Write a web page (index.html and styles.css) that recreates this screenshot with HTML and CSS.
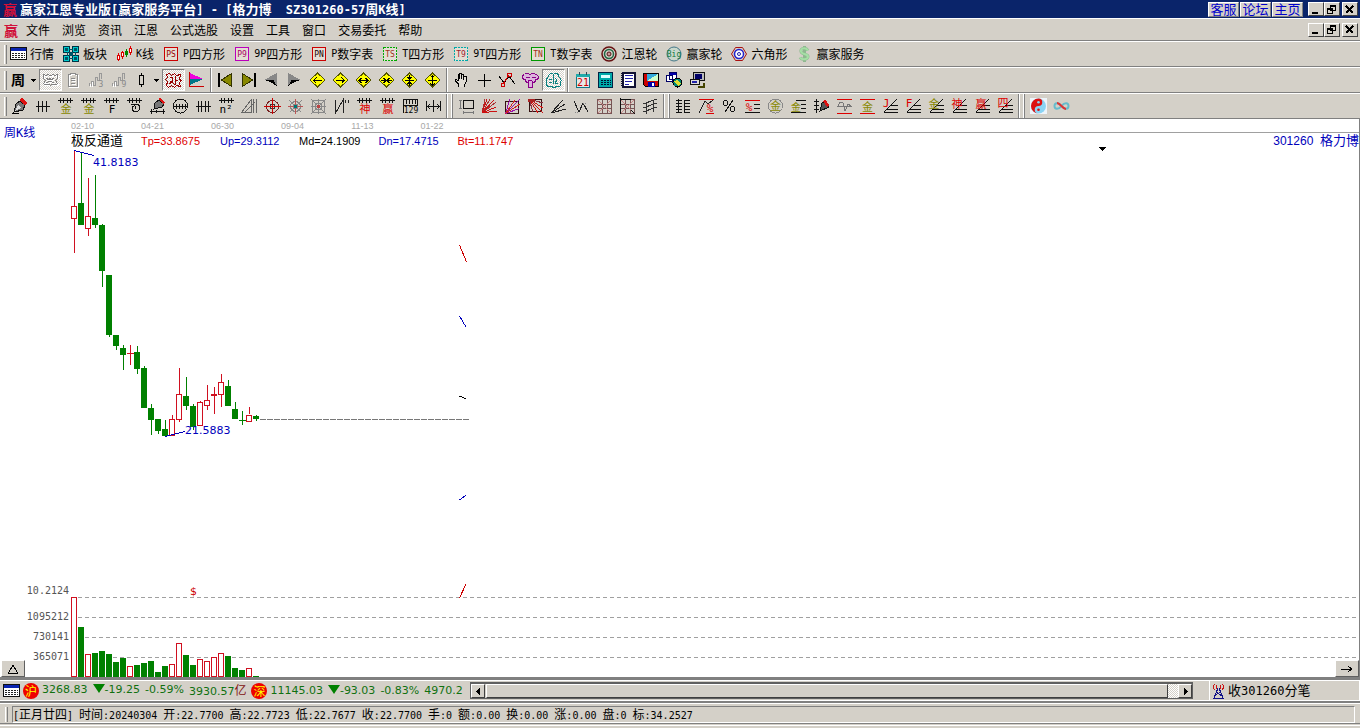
FILE: index.html
```html
<!DOCTYPE html>
<html lang="zh-CN">
<head>
<meta charset="utf-8">
<title>赢家江恩专业版</title>
<link rel="stylesheet" href="styles.css">
</head>
<body>
<svg class="defs" aria-hidden="true">
<defs>
<symbol id="table" viewBox="0 0 17 16"><rect x=".5" y="1.5" width="16" height="12" fill="#fff" stroke="#111"/><path d="M1 2h15v3H1z" fill="#0a24b0"/><path d="M2 7.5h13M2 9.5h13M2 11.5h13" stroke="#222" stroke-dasharray="2 1"/></symbol>
<symbol id="blocks" viewBox="0 0 17 16"><g fill="#0cc" stroke="#034"><path d="M.5.5h6v6h-6zM9.500.5h6v6h-6zM.5 9.500h6v6h-6zM9.500 9.500h6v6h-6z"/></g><path d="M2 2h3v3H2zM11 2h3v3h-3zM2 11h3v3H2zM11 11h3v3h-3zM6 3h4v1H6zM4 6h1v4H4zM12 6h1v4h-1zM6 12h4v1H6zM6 6h4v4H6z" fill="#056"/></symbol>
<symbol id="kline" viewBox="0 0 17 16"><path d="M2.500 7v8M6.500 5v8M14.500 0v9" stroke="#d00"/><path d="M10.500 3v8" stroke="#080"/><g fill="#fff" stroke="#d00"><path d="M1.500 9.500h2v4h-2zM5.500 6.500h2v4h-2zM13.500 2.500h2v4h-2z"/></g><path d="M9 5h3v4H9z" fill="#080"/></symbol>
<symbol id="ps" viewBox="0 0 17 16"><rect x="1.500" y="1.500" width="13" height="13" fill="#e4ded4" stroke="#c00"/><text x="8" y="11" fill="#900">PS</text></symbol>
<symbol id="p9" viewBox="0 0 17 16"><rect x="1.500" y="1.500" width="13" height="13" fill="#e4ded4" stroke="#b0b"/><text x="8" y="11" fill="#a06">P9</text></symbol>
<symbol id="pn" viewBox="0 0 17 16"><rect x="1.500" y="1.500" width="13" height="13" fill="#e4ded4" stroke="#c00"/><text x="8" y="11" fill="#200">PN</text></symbol>
<symbol id="ts" viewBox="0 0 17 16"><rect x="1.500" y="1.500" width="13" height="13" fill="#e4ded4" stroke="#0a0" stroke-dasharray="2 1"/><text x="8" y="11" fill="#a03020">TS</text></symbol>
<symbol id="t9" viewBox="0 0 17 16"><rect x="1.500" y="1.500" width="13" height="13" fill="#e4ded4" stroke="#0aa" stroke-dasharray="2 1"/><text x="8" y="11" fill="#a02030">T9</text></symbol>
<symbol id="tn" viewBox="0 0 17 16"><rect x="1.500" y="1.500" width="13" height="13" fill="#e4ded4" stroke="#090"/><text x="8" y="11" fill="#a03020">TN</text></symbol>
<symbol id="wheel" viewBox="0 0 17 16"><g fill="none" shape-rendering="geometricPrecision"><circle cx="8" cy="8" r="7" stroke="#611" stroke-width="1.500"/><circle cx="8" cy="8" r="4.500" stroke="#264" stroke-width="1.500"/><circle cx="8" cy="8" r="2" stroke="#511" fill="#c99"/></g></symbol>
<symbol id="big" viewBox="0 0 17 16"><circle cx="8" cy="8" r="7" fill="#c9d8cc" stroke="#478" shape-rendering="geometricPrecision"/><text x="8" y="11" fill="#174">Big</text></symbol>
<symbol id="hexa" viewBox="0 0 17 16"><g fill="none" shape-rendering="geometricPrecision"><path d="M4.500 1.500h7l4 6.500-4 6.500h-7L.5 8z" stroke="#a11"/><circle cx="8" cy="8" r="4.500" fill="#fff" stroke="#22c" stroke-width="1.500"/><circle cx="8" cy="8" r="1.500" stroke="#22a"/></g></symbol>
<symbol id="dollar" viewBox="0 0 17 16"><g fill="none" shape-rendering="geometricPrecision"><path d="M12 4.500C10 1 4 2 5 5.500s7 2 7 5-6 4-8 1M8.500 0v16" stroke="#8fb890" stroke-width="3"/><path d="M12 4.500C10 1 4 2 5 5.500s7 2 7 5-6 4-8 1" stroke="#a5e0a5" stroke-width="2"/></g></symbol>

<symbol id="zhou" viewBox="0 0 17 16"><text x="8" y="13" class="t14">周</text></symbol>
<symbol id="down" viewBox="0 0 17 16"><path d="M6 7h5v1h-1v1H9v1H8V9H7V8H6z"/></symbol>
<symbol id="mask" viewBox="0 0 17 16"><path d="M1.500 2.500c3 2 4-1 7 1 3-2 4 1 7-1v4l-2 2 2 3c-2 3-5 0-7 2-2-2-5 1-7-2l2-3-2-2zM4 6l3 2 1-2 1 2 3-2M4 11l4-2 4 2" fill="none" stroke="#fff" transform="translate(1 1)"/><path d="M1.500 2.500c3 2 4-1 7 1 3-2 4 1 7-1v4l-2 2 2 3c-2 3-5 0-7 2-2-2-5 1-7-2l2-3-2-2zM4 6l3 2 1-2 1 2 3-2M4 11l4-2 4 2" fill="none" stroke="#808080"/></symbol>
<symbol id="clip" viewBox="0 0 17 16"><path d="M3.500 2.500h2v-1h5v1h2v12h-9zM6 6.500h4M6 8.500h4M6 11.500h4" fill="none" stroke="#fff" transform="translate(1 1)"/><path d="M3.500 2.500h2v-1h5v1h2v12h-9zM6 6.500h4M6 8.500h4M6 11.500h4" fill="none" stroke="#8a8a8a"/></symbol>
<symbol id="zig3" viewBox="0 0 17 16"><path d="M1.500 11v3M3.500 14V9h2v4h2V5h2v3h2V1h2v6" fill="none" stroke="#999"/><path d="M2.500 12v3M4.500 15v-5" stroke="#fff"/><text x="13" y="15" fill="#888">3</text></symbol>
<symbol id="zig9" viewBox="0 0 17 16"><path d="M1.500 11v3M3.500 14V9h2v4h2V5h2v3h2V1h2v6" fill="none" stroke="#999"/><path d="M2.500 12v3M4.500 15v-5" stroke="#fff"/><text x="13" y="15" fill="#888">9</text></symbol>
<symbol id="candle" viewBox="0 0 17 16"><path d="M8.500 1v14" stroke="#000"/><path d="M6.500 3.500h4v9h-4z" fill="#d4d0c8" stroke="#000"/></symbol>
<symbol id="redface" viewBox="0 0 17 16"><path d="M1.500 2.500l3-1 2 2 3-2 2 2 4-1-1 5 2 1-2 2 1 4-4-1-2 2-3-2-3 2-2-2 1-4-2-2 2-2zM5 5h2v4H5M10 4v4h3M4 12l3-2 3 3 1-4" fill="none" stroke="#900"/></symbol>
<symbol id="flag" viewBox="0 0 17 16"><path d="M1.500 0v14M1 14.500h15" stroke="#c00"/><path d="M2 1l13 6H2z" fill="#e0d"/><path d="M2 7h13L2 13z" fill="#078"/></symbol>
<symbol id="first" viewBox="0 0 17 16"><path d="M1 1h2v14H1z"/><path d="M4.500 8l10-6.500v13z" fill="#880" stroke="#330"/></symbol>
<symbol id="last" viewBox="0 0 17 16"><path d="M14 1h2v14h-2z"/><path d="M12.500 8l-10-6.500v13z" fill="#880" stroke="#330"/></symbol>
<symbol id="prev" viewBox="0 0 17 16"><path d="M14 1v13L8 9 1 8z" fill="#888"/><path d="M1 7.500h9l4 6.500-5-3z"/></symbol>
<symbol id="next" viewBox="0 0 17 16"><path d="M2 1v13l6-5 7-1z" fill="#888"/><path d="M15 7.500H6L2 14l5-3z"/></symbol>
<symbol id="dia" viewBox="0 0 17 16"><path d="M1 8l7.500-7L16 8l-7.500 7z" fill="#ff0" stroke="#550"/></symbol>
<symbol id="d1" viewBox="0 0 17 16"><use href="#dia"/><path d="M5 8.500h8M7.500 5.500L5 8.500l2.500 3" fill="none" stroke="#000"/></symbol>
<symbol id="d2" viewBox="0 0 17 16"><use href="#dia"/><path d="M4 8.500h8M9.500 5.500l2.500 3-2.500 3" fill="none" stroke="#000"/></symbol>
<symbol id="d3" viewBox="0 0 17 16"><use href="#dia"/><path d="M4 8.500h9M6.500 6L4 8.500 6.500 11M10.500 6L13 8.500 10.500 11" fill="none" stroke="#000"/></symbol>
<symbol id="d4" viewBox="0 0 17 16"><use href="#dia"/><path d="M3 8.500h11M5.500 6L8 8.500 5.500 11M11.500 6L9 8.500l2.500 2.500" fill="none" stroke="#000"/></symbol>
<symbol id="d5" viewBox="0 0 17 16"><use href="#dia"/><path d="M4 8.500h9M8.500 3v11M6.500 5L8.500 7l2-2M6.500 12l2-2 2 2" fill="none" stroke="#000"/></symbol>
<symbol id="d6" viewBox="0 0 17 16"><use href="#dia"/><path d="M4 8.500h9M8.500 3v11M6.500 5.500l2-2 2 2M6.500 11.500l2 2 2-2" fill="none" stroke="#000"/></symbol>
<symbol id="hand" viewBox="0 0 17 16"><path d="M5.500 15v-3L2.500 9V7.500l3 1v-6h1V7V1.500h2V7V2.500h2V8V4.500h2.500V10l-1.500 3v2" fill="#e0dcd4" stroke="#000"/></symbol>
<symbol id="cross" viewBox="0 0 17 16"><path d="M8.500 2v13M2 8.500h13" stroke="#000"/></symbol>
<symbol id="nodes" viewBox="0 0 17 16"><path d="M0 4l5 7 5-7 6 8" fill="none" stroke="#000"/><g fill="none" stroke="#c00"><path d="M4 12l6-9"/><circle cx="4" cy="13" r="2"/><circle cx="10.500" cy="3" r="2"/></g></symbol>
<symbol id="cloud" viewBox="0 0 17 16"><path d="M2.500 2.500c2-2 4-1 6 0 2-2 5-1 7 1s0 5-2 4.500c0 2-1 2.500-3 2v5h-4v-5c-2 1-3-.5-3-2.500-4 0-4-4-1-5z" fill="#dcb4dc" stroke="#808"/><path d="M4 5.500h4M10 5.500h4M6 8.500h4" stroke="#808"/></symbol>
<symbol id="brain" viewBox="0 0 17 16"><path d="M3.500 4.500c1-4 3-4 5-2 2-3 5-1 5 2 3 2 3 4 2 6 1 4-2 5-4 4-1 1-4 1-5 0-3 1-6-1-5-4-1-2 0-4 2-6zM8.500 3v9M4 7h3M4 10.500h3M10 6l2 2-2 3 3 1" fill="none" stroke="#0a8080"/></symbol>
<symbol id="cal" viewBox="0 0 17 16"><path d="M2.500 3.500h13v12h-13z" fill="#e8e8e8" stroke="#178"/><path d="M2 2h14v3H2z" fill="#2aa"/><path d="M5 0v3M12 0v3" stroke="#345"/><text x="9" y="14" fill="#c00" class="t9">21</text></symbol>
<symbol id="calc" viewBox="0 0 17 16"><path d="M1.500.5h14v15h-14z" fill="#0aa" stroke="#024"/><path d="M4 3h9v3H4z" fill="#dff"/><path d="M4 8.500h10M4 10.500h10M4 12.500h10" stroke="#013" stroke-width="1.500" stroke-dasharray="2 1"/></symbol>
<symbol id="note" viewBox="0 0 17 16"><path d="M2.500.5h12v14h-12z" fill="#fff" stroke="#113" stroke-width="2"/><path d="M5 3.500h8M5 6.500h8M5 9.500h7M5 12.500h4" stroke="#22a"/><path d="M2 1v14" stroke="#113" stroke-width="2" stroke-dasharray="1 1"/></symbol>
<symbol id="disk" viewBox="0 0 17 16"><path d="M.5 1.500h15v13h-13l-2-2z" fill="#c00" stroke="#000"/><path d="M4 2h11v7H4z" fill="#3ad"/><path d="M4 9l11-7v7z" fill="#cfc"/><path d="M5 10h7v5H5z" fill="#00a"/><path d="M9 11h2v3H9z" fill="#fff"/></symbol>
<symbol id="net" viewBox="0 0 17 16"><path d="M3.500.5h7v7h-7zM.5 3.500h6v6h-6z" fill="#fff" stroke="#006"/><path d="M4 1h6v2H4z" fill="#00a"/><circle cx="11.500" cy="10.500" r="4.500" fill="#087" stroke="#000"/><path d="M8 9l4-1 3 4-3 2z" fill="#dd3"/></symbol>
<symbol id="pcs" viewBox="0 0 17 16"><path d="M4.500.5h11v8h-11z" fill="#bbb" stroke="#111"/><path d="M6 2h7v5H6z" fill="#006"/><path d="M1.500 7.500h9v5h-9z" fill="#ddd" stroke="#111"/><path d="M3 9h5v2H3z" fill="#22a"/><path d="M9 14.500h6v-4" fill="none" stroke="#440" stroke-width="2"/></symbol>

<symbol id="pen" viewBox="0 0 17 16"><path d="M3 14l2-8 4-3 5 4-2 5z" fill="#777" stroke="#111"/><path d="M8 2l3-2 5 5-2 3z" fill="#d11"/><path d="M4 13l3-6 3 3z" fill="#ddd"/><path d="M1 15.500h7" stroke="#000"/></symbol>
<symbol id="ruler" viewBox="0 0 17 16"><path d="M2 8.500h14M4.500 3v11M8.500 3v11M12.500 3v11" stroke="#111"/></symbol>
<symbol id="scale" viewBox="0 0 17 16"><path d="M1 2.500h15M3.500 0v5M6.500 0v5M10.500 0v5M13.500 0v5" stroke="#111"/></symbol>
<symbol id="gold1" viewBox="0 0 17 16"><use href="#scale"/><text x="9" y="15" fill="#880" class="t11">金</text></symbol>
<symbol id="fscale" viewBox="0 0 17 16"><use href="#scale"/><text x="9" y="15" class="t11">F</text></symbol>
<symbol id="spiral" viewBox="0 0 17 16"><use href="#scale"/><path d="M5 6.500h7c3 2 2 7-2 7s-5-3-3-5 4 1 2 2" fill="none" stroke="#111"/></symbol>
<symbol id="penruler" viewBox="0 0 17 16"><path d="M5 11l1-6 4-3 5 4-2 3z" fill="#777" stroke="#111"/><path d="M9 1l2-1 5 4-1 3z" fill="#d11"/><path d="M1 13.500h15M2.500 11v5M7.500 12v3M14.500 11v5" stroke="#111"/></symbol>
<symbol id="orb" viewBox="0 0 17 16"><circle cx="8.500" cy="8" r="7" fill="none" stroke="#111"/><path d="M2 8.500h13M4.500 6v5M7.500 6v5M10.500 6v5M13.500 6v5" stroke="#111"/></symbol>
<symbol id="ruler4" viewBox="0 0 17 16"><path d="M1 8.500h15M3.500 3v11M6.500 3v11M10.500 3v11M13.500 3v11" stroke="#111"/></symbol>
<symbol id="nsq" viewBox="0 0 17 16"><use href="#scale"/><text x="8" y="15" class="t11">n²</text></symbol>
<symbol id="fork" viewBox="0 0 17 16"><path d="M1 14l9-12v12zM12.500 1v14M15.500 1v14M4 14L14 4" fill="none" stroke="#666"/></symbol>
<symbol id="target" viewBox="0 0 17 16"><circle cx="8.500" cy="8.500" r="6" fill="none" stroke="#722"/><circle cx="8.500" cy="8.500" r="2.500" fill="none" stroke="#333"/><path d="M8.500 0v16M0 8.500h17" stroke="#c00"/></symbol>
<symbol id="star" viewBox="0 0 17 16"><g fill="none" stroke="#888"><circle cx="8.500" cy="8.500" r="5"/><circle cx="8.500" cy="8.500" r="2.500"/><path d="M2.500 2.500l12 12M14.500 2.500l-12 12"/></g><path d="M8.500 1v15M1 8.500h15" stroke="#b55"/><path d="M7 7h3v3H7z" fill="#077"/></symbol>
<symbol id="web" viewBox="0 0 17 16"><g fill="none" stroke="#888"><path d="M2.500 2.500h12v12h-12zM5.500 5.500h6v6h-6zM1 1l15 15M16 1L1 16M8.500 1v15M1 8.500h15"/></g><path d="M7 7h3v3H7z" fill="#b44"/></symbol>
<symbol id="angle" viewBox="0 0 17 16"><path d="M2.500 2v13L10 2v13M12.500 2v3M15.500 2v3" fill="none" stroke="#222"/></symbol>
<symbol id="shen" viewBox="0 0 17 16"><use href="#scale"/><text x="9" y="15" fill="#d00" class="t11">神</text></symbol>
<symbol id="ying" viewBox="0 0 17 16"><use href="#scale"/><text x="9" y="15" fill="#d00" class="t11">赢</text></symbol>
<symbol id="r129" viewBox="0 0 17 16"><path d="M1 1.500h15M1.500 1v14M15.500 1v7M4.500 1v5M7.500 1v5M10.500 1v5M13 1v5M1 7.500h15" stroke="#111"/><text x="9" y="15">129</text></symbol>
<symbol id="span" viewBox="0 0 17 16"><path d="M1.500 3v10M15.500 3v10M8.500 2v12M2 8.500h13M5 6L2.500 8.500 5 11M12 6l2.500 2.500L12 11" fill="none" stroke="#111"/></symbol>
<symbol id="measure" viewBox="0 0 17 16"><path d="M1 2.500h3M2.500 2v9M1 10.500h3M5.500 13v3M15.500 13v3M5 14.500h10" fill="none" stroke="#777"/><path d="M5.500 2.500h10v8h-10z" fill="none" stroke="#111"/></symbol>
<symbol id="fan" viewBox="0 0 17 16"><path d="M1 15L4 1M1 15L9 1M1 15L15 4" stroke="#a33"/><path d="M1 15l5-14M1 15L13 2M1 15l14-6M1 15l15-2" stroke="#c11"/></symbol>
<symbol id="fanbox" viewBox="0 0 17 16"><path d="M1.500 3.500h13v12h-13z" fill="none" stroke="#311"/><path d="M1.500 15.500L6 1M1.500 15.500L16 1M1.500 15.500l14-5" stroke="#91a"/><path d="M1.500 15.500L11 2M1.500 15.500L16 6" stroke="#c22"/></symbol>
<symbol id="fanbox2" viewBox="0 0 17 16"><path d="M2.500 1.500h12v12h-12z" fill="none" stroke="#311"/><path d="M2 1l14 14M2 1l9 14M2 1l14 9" stroke="#c11"/><path d="M2 1l4 13M2 1l14 4" stroke="#834"/><path d="M1 1h7v3H1z" fill="#a22"/></symbol>
<symbol id="rays" viewBox="0 0 17 16"><path d="M1 15L13 2M1 15l14-9M1 15l15-4" stroke="#222"/></symbol>
<symbol id="vee" viewBox="0 0 17 16"><path d="M1 3l5 11 4-9 5 9" fill="none" stroke="#222"/><path d="M2 14.500h4M10 5.500h3" stroke="#888" stroke-dasharray="1 1"/></symbol>
<symbol id="grid" viewBox="0 0 17 16"><path d="M1.500 1.500h14v14h-14zM6.500 1v15M11.500 1v15M1 6.500h15M1 10.500h15" fill="none" stroke="#755"/><path d="M2 2l13 13M15 2L2 15" stroke="#c88"/></symbol>
<symbol id="gridx" viewBox="0 0 17 16"><use href="#grid"/><path d="M1.500 0v16M1 1.500h11M12 12l4 4" stroke="#111"/></symbol>
<symbol id="para" viewBox="0 0 17 16"><path d="M1 6l14-5M1 10l14-5M1 14l14-5M4.500 4v12M11.500 2v12" fill="none" stroke="#333"/></symbol>
<symbol id="levels" viewBox="0 0 17 16"><path d="M3.500 1v14M1 2.500h6M1 5.500h6M1 8.500h6M1 11.500h6M1 14.500h6M9 2.500h6M9 5.500h6M9 8.500h6M9 11.500h6M9 14.500h6M9.500 2v13" fill="none" stroke="#111"/></symbol>
<symbol id="curvepct" viewBox="0 0 17 16"><path d="M1 1.500h15M8 15.500h8" stroke="#d00"/><path d="M1 15L7 3l3 3 5-4" fill="none" stroke="#222"/><text x="12" y="14" fill="#d00" class="t11">%</text></symbol>
<symbol id="pct" viewBox="0 0 17 16"><g fill="none" stroke="#111"><circle cx="4.500" cy="5" r="2.500"/><circle cx="11.500" cy="11" r="2.500"/><path d="M12 2L4 14"/></g></symbol>
<symbol id="pctlines" viewBox="0 0 17 16"><path d="M10 6.500h6M10 10.500h6M1 14.500h15" stroke="#111"/><path d="M1 2.500h15" stroke="#d00"/><text x="5" y="13" fill="#d00" class="t11">%</text></symbol>
<symbol id="goldring" viewBox="0 0 17 16"><circle cx="8.500" cy="8" r="7" fill="none" stroke="#888"/><text x="8.500" y="12" fill="#880" class="t11">金</text></symbol>
<symbol id="goldlines" viewBox="0 0 17 16"><path d="M6 2.500h10M11 6.500h5M11 10.500h5M1 14.500h15" stroke="#111"/><text x="6" y="13" fill="#880" class="t9">金</text></symbol>
<symbol id="penlevels" viewBox="0 0 17 16"><path d="M3.500 1v14M1 3.500h5M1 7.500h5M1 11.500h5" stroke="#111"/><path d="M7 13l2-8 3-2 4 6z" fill="#555" stroke="#111"/><path d="M10 3l2-2 4 6-1 3z" fill="#d11"/></symbol>
<symbol id="wave" viewBox="0 0 17 16"><path d="M1 1.500h15M1 15.500h15" stroke="#d00"/><path d="M1 8.500h15M2 8l2-4 3 1 2 8 3-7 3 2" fill="none" stroke="#777"/></symbol>
<symbol id="goldband" viewBox="0 0 17 16"><path d="M1 1.500h15M1 15.500h15" stroke="#d00"/><text x="8.500" y="13" fill="#880" class="t11">金</text></symbol>
<symbol id="trend" viewBox="0 0 17 16"><path d="M2 14L15 1M5 11.500h11M2 14.500h14M9 7.500h7" stroke="#111"/></symbol>
<symbol id="tj" viewBox="0 0 17 16"><use href="#trend"/><text x="4" y="9" fill="#d00" class="t11">J</text></symbol>
<symbol id="tf" viewBox="0 0 17 16"><use href="#trend"/><text x="4" y="9" fill="#d00" class="t11">F</text></symbol>
<symbol id="tgold" viewBox="0 0 17 16"><use href="#trend"/><text x="6" y="10" fill="#880" class="t11">金</text></symbol>
<symbol id="tshen" viewBox="0 0 17 16"><use href="#trend"/><text x="6" y="10" fill="#d00" class="t11">神</text></symbol>
<symbol id="tying" viewBox="0 0 17 16"><use href="#trend"/><text x="7" y="10" fill="#d00" class="t11">赢</text></symbol>
<symbol id="tfour" viewBox="0 0 17 16"><use href="#trend"/><text x="6" y="9" fill="#d00" class="t11">四</text></symbol>
<symbol id="yinyang" viewBox="0 0 17 16"><path d="M0 0h17v16H0z" fill="#eef4fa"/><g shape-rendering="geometricPrecision"><circle cx="8.500" cy="8" r="7.500" fill="#8bd4f4"/><path d="M8.500.5a7.500 7.500 0 0 0 0 15 3.750 3.750 0 0 1 0-7.500 3.750 3.750 0 0 0 0-7.500z" fill="#d11"/><circle cx="8.500" cy="4.300" r="1.300" fill="#8bd4f4"/><circle cx="8.500" cy="11.800" r="1.300" fill="#d11"/></g></symbol>
<symbol id="infinity" viewBox="0 0 17 16"><g fill="none" stroke-width="2" shape-rendering="geometricPrecision"><path d="M8.500 8C5.500 4 1.500 4.500 1.500 8s4 4 7 0 7-3.500 7 0-4 4-7 0" stroke="#6bc"/><path d="M4 5c3 0 6 6 9 6" stroke="#d33"/></g></symbol>
<symbol id="min" viewBox="0 0 12 11"><path d="M2 8h6v2H2z"/></symbol>
<symbol id="restore" viewBox="0 0 12 11"><path d="M4.500 1v5h5V1zM1.500 4.500h5v5h-5z" fill="#d4d0c8" stroke="#000"/><path d="M4 1.500h6M1 5h6" stroke="#000" stroke-width="2"/></symbol>
<symbol id="close" viewBox="0 0 12 11"><path d="M2 2l7 7M9 2L2 9" stroke="#000" stroke-width="1.500"/></symbol>
<symbol id="tower" viewBox="0 0 17 16"><path d="M8 5L4 15M9 5l4 10M5 12l6-3M6 9l6 4M3 15.500h11" stroke="#118" fill="none"/><path d="M5 1C3 3 3 5 5 7M12 1c2 2 2 4 0 6M7 2C6 3 6 5 7 6M10 2c1 1 1 3 0 4" stroke="#c11" fill="none"/></symbol>
</defs>
</svg>

<header class="titlebar">
  <span class="logo">赢</span>
  <h1>赢家江恩专业版<i>[</i>赢家服务平台<i>] - [</i>格力博<i>&nbsp; SZ301260-57</i>周<i>K</i>线<i>]</i></h1>
  <a class="quick" href="#">客服</a><a class="quick" href="#">论坛</a><a class="quick" href="#">主页</a>
  <div class="winbtns">
    <button aria-label="最小化"><svg><use href="#min"/></svg></button><button aria-label="还原"><svg><use href="#restore"/></svg></button><button aria-label="关闭"><svg><use href="#close"/></svg></button>
  </div>
</header>

<nav class="menubar">
  <span class="logo">赢</span>
  <button>文件</button><button>浏览</button><button>资讯</button><button>江恩</button><button>公式选股</button><button>设置</button><button>工具</button><button>窗口</button><button>交易委托</button><button>帮助</button>
  <div class="winbtns">
    <button aria-label="最小化子窗口"><svg><use href="#min"/></svg></button><button aria-label="还原子窗口"><svg><use href="#restore"/></svg></button><button aria-label="关闭子窗口"><svg><use href="#close"/></svg></button>
  </div>
</nav>

<div class="toolbar labelled" role="toolbar">
  <span class="grip"></span>
  <button><svg><use href="#table"/></svg>行情</button>
  <button><svg><use href="#blocks"/></svg>板块</button>
  <button><svg><use href="#kline"/></svg><i>K</i>线</button>
  <button><svg><use href="#ps"/></svg><i>P</i>四方形</button>
  <button><svg><use href="#p9"/></svg><i>9P</i>四方形</button>
  <button><svg><use href="#pn"/></svg><i>P</i>数字表</button>
  <button><svg><use href="#ts"/></svg><i>T</i>四方形</button>
  <button><svg><use href="#t9"/></svg><i>9T</i>四方形</button>
  <button><svg><use href="#tn"/></svg><i>T</i>数字表</button>
  <button><svg><use href="#wheel"/></svg>江恩轮</button>
  <button><svg><use href="#big"/></svg>赢家轮</button>
  <button><svg><use href="#hexa"/></svg>六角形</button>
  <button><svg><use href="#dollar"/></svg>赢家服务</button>
</div>

<div class="toolbar" role="toolbar">
  <span class="grip"></span>
  <button class="mid" aria-label="周期"><svg><use href="#zhou"/></svg></button><button class="drop" aria-label="选择周期"><svg><use href="#down"/></svg></button>
  <button class="on" aria-label="形态"><svg><use href="#mask"/></svg></button><button aria-label="剪贴板"><svg><use href="#clip"/></svg></button><button aria-label="三段"><svg><use href="#zig3"/></svg></button><button aria-label="九段"><svg><use href="#zig9"/></svg></button>
  <button class="mid" aria-label="蜡烛图"><svg><use href="#candle"/></svg></button><button class="drop" aria-label="选择图形"><svg><use href="#down"/></svg></button>
  <button class="on" aria-label="图案"><svg><use href="#redface"/></svg></button><button aria-label="旗"><svg><use href="#flag"/></svg></button>
  <span class="sep"></span>
  <button aria-label="首个"><svg><use href="#first"/></svg></button><button aria-label="末个"><svg><use href="#last"/></svg></button><button aria-label="上一个"><svg><use href="#prev"/></svg></button><button aria-label="下一个"><svg><use href="#next"/></svg></button><button aria-label="左移"><svg><use href="#d1"/></svg></button><button aria-label="右移"><svg><use href="#d2"/></svg></button><button aria-label="横向放大"><svg><use href="#d3"/></svg></button><button aria-label="横向缩小"><svg><use href="#d4"/></svg></button><button aria-label="缩小"><svg><use href="#d5"/></svg></button><button aria-label="放大"><svg><use href="#d6"/></svg></button>
  <span class="sep"></span>
  <button aria-label="拖动"><svg><use href="#hand"/></svg></button><button aria-label="十字"><svg><use href="#cross"/></svg></button><button aria-label="节点"><svg><use href="#nodes"/></svg></button><button aria-label="云"><svg><use href="#cloud"/></svg></button><button class="on" aria-label="智能"><svg><use href="#brain"/></svg></button>
  <span class="sep"></span>
  <button aria-label="日历"><svg><use href="#cal"/></svg></button><button aria-label="计算器"><svg><use href="#calc"/></svg></button><button aria-label="笔记"><svg><use href="#note"/></svg></button><button aria-label="保存"><svg><use href="#disk"/></svg></button><button aria-label="网络"><svg><use href="#net"/></svg></button><button aria-label="电脑"><svg><use href="#pcs"/></svg></button>
</div>

<div class="toolbar" role="toolbar">
  <span class="grip"></span>
  <button aria-label="画笔"><svg><use href="#pen"/></svg></button><button aria-label="标尺"><svg><use href="#ruler"/></svg></button><button aria-label="黄金尺一"><svg><use href="#gold1"/></svg></button><button aria-label="黄金尺二"><svg><use href="#gold1"/></svg></button><button aria-label="斐波那契"><svg><use href="#fscale"/></svg></button><button aria-label="螺旋"><svg><use href="#spiral"/></svg></button><button aria-label="画尺"><svg><use href="#penruler"/></svg></button><button aria-label="圆尺"><svg><use href="#orb"/></svg></button><button aria-label="四线尺"><svg><use href="#ruler4"/></svg></button><button aria-label="平方"><svg><use href="#nsq"/></svg></button><button aria-label="叉线"><svg><use href="#fork"/></svg></button><button aria-label="靶"><svg><use href="#target"/></svg></button><button aria-label="星"><svg><use href="#star"/></svg></button><button aria-label="网"><svg><use href="#web"/></svg></button><button aria-label="角度"><svg><use href="#angle"/></svg></button><button aria-label="神尺"><svg><use href="#shen"/></svg></button><button aria-label="赢尺"><svg><use href="#ying"/></svg></button><button aria-label="数尺"><svg><use href="#r129"/></svg></button><button aria-label="间距"><svg><use href="#span"/></svg></button>
  <span class="divider"></span>
  <button aria-label="测量"><svg><use href="#measure"/></svg></button><button aria-label="扇形"><svg><use href="#fan"/></svg></button><button aria-label="上扇箱"><svg><use href="#fanbox"/></svg></button><button aria-label="下扇箱"><svg><use href="#fanbox2"/></svg></button><button aria-label="射线"><svg><use href="#rays"/></svg></button><button aria-label="折线"><svg><use href="#vee"/></svg></button><button aria-label="网格"><svg><use href="#grid"/></svg></button><button aria-label="网格轴"><svg><use href="#gridx"/></svg></button><button aria-label="平行线"><svg><use href="#para"/></svg></button>
  <span class="divider"></span>
  <button aria-label="价位"><svg><use href="#levels"/></svg></button><button aria-label="曲线比例"><svg><use href="#curvepct"/></svg></button><button aria-label="百分比"><svg><use href="#pct"/></svg></button><button aria-label="百分比线"><svg><use href="#pctlines"/></svg></button><button aria-label="黄金圈"><svg><use href="#goldring"/></svg></button><button aria-label="黄金线"><svg><use href="#goldlines"/></svg></button><button aria-label="画价位"><svg><use href="#penlevels"/></svg></button><button aria-label="波浪"><svg><use href="#wave"/></svg></button><button aria-label="黄金带"><svg><use href="#goldband"/></svg></button><button aria-label="J线"><svg><use href="#tj"/></svg></button><button aria-label="F线"><svg><use href="#tf"/></svg></button><button aria-label="金线"><svg><use href="#tgold"/></svg></button><button aria-label="神线"><svg><use href="#tshen"/></svg></button><button aria-label="赢线"><svg><use href="#tying"/></svg></button><button aria-label="四线"><svg><use href="#tfour"/></svg></button>
  <span class="divider"></span>
  <button aria-label="太极"><svg><use href="#yinyang"/></svg></button><button aria-label="无限"><svg><use href="#infinity"/></svg></button>
</div>

<main class="chart">
  <div class="period">周<i>K</i>线</div>
  <div class="dates"><span>02-10</span><span>04-21</span><span>06-30</span><span>09-04</span><span>11-13</span><span>01-22</span></div>
  <div class="legend">
    <b>极反通道</b><span class="red">Tp=33.8675</span><span class="blue">Up=29.3112</span><span>Md=24.1909</span><span class="blue">Dn=17.4715</span><span class="red">Bt=11.1747</span>
    <strong>301260&nbsp; <em>格力博</em></strong>
  </div>
  <svg class="price" role="img" aria-label="周K线图">
    <g transform="translate(-71 -149)">
      <path class="up" d="M74.500 150v56M74.500 218v35M88.500 178v38M88.500 229v7M130.500 345v20M127 353.500h7M172.500 415v4M179.500 368v26M179.500 419v3M200.500 401v1M207.500 385v15M207.500 406v4M214.500 387v27M211 394.500h6M211 395.500h6M221.500 374v8M221.500 395v12M249.500 407v7"/>
      <path class="up" d="M71.500 206.500h5v12h-5zM85.500 216.500h5v12h-5zM169.500 419.500h5v16h-5zM176.500 394.500h5v25h-5zM197.500 402.500h5v23h-5zM204.500 400.500h5v5h-5zM218.500 382.500h5v12h-5zM246.500 415.500h5v6h-5z"/>
      <path class="downwick" d="M81.500 152v52M95.500 175v53M102.500 224v63M109.500 275v62M116.500 335v15M123.500 345v25M137.500 346v28M144.500 366v42M151.500 404v31M158.500 419v15M165.500 420v17M186.500 377v33M193.500 404v26M228.500 380v26M235.500 402v17M242.500 411v14M239 420.500h7M256.500 415v6"/>
      <path class="downbody" d="M78 203h6v22h-6zM92 218h6v7h-6zM99 225h6v46h-6zM106 275h6v60h-6zM113 335h6v11h-6zM120 348h6v7h-6zM134 352h6v17h-6zM141 368h6v40h-6zM148 408h6v12h-6zM155 419h6v12h-6zM162 429h6v7h-6zM183 396h6v10h-6zM190 406h6v21h-6zM225 386h6v20h-6zM232 409h6v10h-6zM253 416h6v3h-6z"/>
      <path d="M260 419.500h209" stroke="#777" stroke-dasharray="6 1"/>
      <path d="M74 150.500l20 5M165 436.500l20-5M459.500 316l6.500 11M459.500 500l6.500-5" stroke="#00b"/>
      <path d="M459.500 245l7 17" stroke="#c00"/><path d="M459.500 396l6.500 3" stroke="#000"/>
      <text x="93" y="166">41.8183</text><text x="185" y="434">21.5883</text>
      <path d="M1099 147h7v1h-1v1h-1v1h-1v1h-1v-1h-1v-1h-1v-1h-1z"/>
    </g>
  </svg>
  <div class="axis"><span>10.2124</span><span>1095212</span><span>730141</span><span>365071</span></div>
  <svg class="volume" role="img" aria-label="成交量图">
    <path d="M0 16.500h4000M0 36.500h4000M0 56.500h4000M0 76.500h4000" stroke="#a0a0a0" stroke-dasharray="4 3"/>
    <g transform="translate(-71 -581)">
      <path class="up" d="M71.500 597.500h5v79h-5zM85.500 654.500h5v22h-5zM127.500 666.500h5v10h-5zM169.500 664.500h5v12h-5zM176.500 643.500h5v33h-5zM197.500 659.500h5v17h-5zM204.500 661.500h5v15h-5zM211.500 657.500h5v19h-5zM218.500 653.500h5v23h-5zM246.500 668.500h5v8h-5z"/>
      <path class="downbody" d="M78 627h6v50h-6zM92 653h6v24h-6zM99 651h6v26h-6zM106 654h6v23h-6zM113 662h6v15h-6zM120 658h6v19h-6zM134 665h6v12h-6zM141 663h6v14h-6zM148 661h6v16h-6zM155 672h6v5h-6zM162 666h6v11h-6zM183 655h6v22h-6zM190 665h6v12h-6zM225 656h6v21h-6zM232 668h6v9h-6zM239 670h6v7h-6zM253 676h6v1h-6z"/>
      <path d="M459.500 598l6.500-14" stroke="#c00"/>
      <text x="190" y="595" class="money">$</text>
    </g>
  </svg>
  <button class="corner left" aria-label="展开"><svg viewBox="0 0 12 12"><path d="M1.500 10L6 2l4.500 8z" fill="none" stroke="#000"/></svg></button>
  <button class="corner right" aria-label="向右"><svg viewBox="0 0 12 12"><path d="M0 6h11M7.500 3.500L11 6 7.500 8.500" fill="none" stroke="#000"/></svg></button>
</main>

<div class="ticker">
  <div class="quotes">
    <svg><use href="#table"/></svg>
    <span class="badge">沪</span><span class="quote"><span>3268.83</span><span><s></s>-19.25</span><span>-0.59%</span><span>3930.57<em>亿</em></span></span>
    <span class="badge">深</span><span class="quote"><span>11145.03</span><span><s></s>-93.03</span><span>-0.83%</span><span>4970.2</span></span>
  </div>
  <div class="scroll">
    <button aria-label="向左滚动"><svg viewBox="0 0 9 9"><path d="M6 1v7L2 4.500z"/></svg></button>
    <div class="thumb"></div>
    <div class="track"></div>
    <button aria-label="向右滚动"><svg viewBox="0 0 9 9"><path d="M3 1v7l4-3.500z"/></svg></button>
  </div>
  <div class="feed"><svg><use href="#tower"/></svg><span>收<i>301260</i>分笔</span></div>
</div>

<footer class="status">
  <span class="grip"></span>
  <div class="fields">
    <span><i>[</i>正月廿四<i>]</i></span><span>时间<i>:20240304</i></span><span>开<i>:22.7700</i></span><span>高<i>:22.7723</i></span><span>低<i>:22.7677</i></span><span>收<i>:22.7700</i></span><span>手<i>:0</i></span><span>额<i>:0.00</i></span><span>换<i>:0.00</i></span><span>涨<i>:0.00</i></span><span>盘<i>:0</i></span><span>标<i>:34.2527</i></span>
  </div>
</footer>
</body>
</html>
```
FILE: styles.css
```css
* { box-sizing: border-box; }

body {
  margin: 0;
  min-height: 100vh;
  display: flex;
  flex-direction: column;
  background: #d4d0c8;
  color: #000;
  font: 12px/16px "Noto Sans CJK SC", sans-serif;
}

i {
  font: 10px/16px "DejaVu Sans Mono", monospace;
  white-space: pre;
}

em { font-style: normal; }

button {
  margin: 0;
  padding: 0;
  border: 0;
  background: none;
  color: inherit;
  font: inherit;
}

svg { display: block; shape-rendering: crispEdges; }
svg text { text-anchor: middle; font: 8px "DejaVu Sans Mono", "Noto Sans CJK SC", monospace; }
svg .t9 { font-size: 10px; }
svg .t11 { font-size: 11px; }
svg .t14 { font-size: 14px; font-weight: bold; }
.defs { position: absolute; width: 0; height: 0; }

/* title and menu */
.titlebar {
  display: flex;
  align-items: center;
  height: 18px;
  padding: 0 2px 0 3px;
  background: #0a246a;
  color: #fff;
}
.logo {
  width: 17px;
  color: #d0103a;
  font-size: 14px;
  font-weight: bold;
}
.titlebar h1 { flex: 1; margin: 0; font-size: 13px; line-height: 17px; white-space: nowrap; }
.titlebar h1 i { font-size: 12px; font-weight: bold; }
.quick {
  width: 31px;
  height: 15px;
  margin-right: 1px;
  border: 1px solid #fff;
  border-right-color: #808080;
  border-bottom-color: #808080;
  background: #d4d0c8;
  color: #00c;
  font-size: 13px;
  line-height: 12px;
  text-align: center;
  text-decoration: none;
}
.winbtns { display: flex; margin-left: 4px; }
.winbtns button {
  width: 16px;
  height: 14px;
  padding: 0 1px;
  border: 1px solid;
  border-color: #fff #404040 #404040 #fff;
  background: #d4d0c8;
}
.winbtns button:last-child { margin-left: 2px; }
.winbtns svg { width: 12px; height: 11px; }

.menubar {
  display: flex;
  align-items: center;
  gap: 12px;
  height: 23px;
  padding: 0 2px 0 4px;
  border-top: 1px solid #fff;
  border-bottom: 1px solid #808080;
}
.menubar .logo { width: 10px; }
.menubar .winbtns { margin-left: auto; }

/* toolbars */
.toolbar {
  display: flex;
  align-items: center;
  height: 26px;
  border-top: 1px solid #fff;
  border-bottom: 1px solid #808080;
}
.toolbar svg { width: 17px; height: 16px; flex: none; }
.toolbar button {
  display: flex;
  align-items: center;
  justify-content: center;
  width: 23px;
  height: 22px;
  overflow: hidden;
}
.toolbar .mid { width: 20px; }
.toolbar .drop { width: 11px; }
.toolbar .on {
  border: 1px solid;
  border-color: #808080 #fff #fff #808080;
  background: repeating-conic-gradient(#fff 0 25%, #d4d0c8 0 50%) 0 0 / 2px 2px;
}
.toolbar.labelled { gap: 9px; }
.toolbar.labelled button { width: auto; white-space: nowrap; }
.toolbar.labelled svg { margin-right: 3px; }
.grip {
  width: 3px;
  height: 19px;
  margin: 0 1px 0 4px;
  border-left: 1px solid #fff;
  border-right: 1px solid #808080;
}
.toolbar.labelled .grip { margin-right: -6px; }
.sep {
  width: 2px;
  height: 24px;
  margin: 0 2px;
  border-left: 1px solid #808080;
  border-right: 1px solid #fff;
}
.divider {
  width: 8px;
  height: 24px;
  margin: 0 1px;
  border-left: 1px solid #808080;
  background: linear-gradient(90deg, #fff 1px, transparent 1px 4px, #fff 4px 5px, #808080 5px 6px, transparent 6px);
}

/* chart */
.chart {
  position: relative;
  flex: 1;
  display: grid;
  grid-template-columns: 71px minmax(0, 1fr);
  grid-template-rows: 14px 16px minmax(432px, 1fr) 96px;
  background: #fff;
  border-right: 1px solid #808080;
}
.period { grid-row: 1 / 3; padding: 5px 0 0 4px; color: #00b; }
.period i { font-size: 12px; }
.dates {
  display: flex;
  gap: 47px;
  border-bottom: 1px solid #a0a0a0;
  color: #a8a8a8;
  font: 9px/15px "Liberation Sans", sans-serif;
}
.legend {
  display: flex;
  gap: 18px;
  font: 11px/16px "Liberation Sans", "Noto Sans CJK SC", sans-serif;
}
.legend span { min-width: 61px; }
.legend b { font-size: 13px; font-weight: normal; }
.legend strong { margin-left: auto; color: #00b; font-size: 12px; font-weight: normal; }
.legend em { font-size: 13px; }
.red { color: #d00; }
.blue { color: #00b; }
.price, .volume { grid-column: 2; width: 100%; height: 100%; overflow: hidden; }
.price { overflow: visible; }
.chart text { text-anchor: start; fill: #00b; font: 11px "DejaVu Sans", sans-serif; }
.chart .money { fill: #c00; }
.up { fill: #fff; stroke: #d01020; }
.downwick { stroke: #008000; }
.downbody { fill: #008000; }
.axis {
  display: flex;
  flex-direction: column;
  padding-right: 2px;
  color: #555;
  font: 10px/20px "DejaVu Sans Mono", monospace;
  text-align: right;
}
.axis span:first-child { margin-bottom: 6px; }
.corner {
  position: absolute;
  bottom: 0;
  width: 24px;
  height: 17px;
  border: 1px solid;
  border-color: #fff #606060 #606060 #fff;
  background: #d4d0c8;
}
.corner svg { width: 12px; height: 12px; margin: 0 auto; }
.left { left: 1px; }
.right { right: 0; }

/* ticker */
.ticker {
  display: flex;
  align-items: center;
  height: 26px;
  border-top: 3px solid #808080;
  border-bottom: 2px solid #808080;
  box-shadow: inset 0 1px #fff, inset 0 -1px #fff;
}
.quotes {
  display: flex;
  align-items: center;
  gap: 3px;
  width: 470px;
  padding-left: 3px;
  overflow: hidden;
  color: #107010;
  font: 11px/16px "DejaVu Sans", sans-serif;
  white-space: nowrap;
}
.quotes > svg, .feed svg { width: 17px; height: 16px; flex: none; }
.quote { display: flex; gap: 5px; margin-right: 2px; }
.quotes s {
  display: inline-block;
  border: 6px solid transparent;
  border-top: 9px solid #008000;
  border-bottom: 0;
}
.quotes em { color: #801010; font: 12px/16px "Noto Sans CJK SC", sans-serif; }
.badge {
  flex: none;
  width: 16px;
  height: 16px;
  border-radius: 50%;
  background: #e00;
  color: #ff0;
  font: 12px/16px "Noto Sans CJK SC", sans-serif;
  text-align: center;
}
.scroll {
  flex: 1;
  display: flex;
  height: 17px;
  border: 1px solid #606060;
  border-top-width: 2px;
}
.scroll button {
  width: 14px;
  border: 1px solid;
  border-color: #fff #404040 #404040 #fff;
}
.scroll svg { width: 9px; height: 9px; margin: 0 auto; }
.thumb {
  flex: 1;
  margin-left: 1px;
  border: 1px solid;
  border-color: #fff #404040 #404040 #fff;
}
.track {
  width: 10px;
  background: repeating-conic-gradient(#fff 0 25%, #d4d0c8 0 50%) 0 0 / 2px 2px;
}
.feed {
  display: flex;
  align-items: center;
  gap: 1px;
  width: 151px;
  height: 19px;
  margin-left: 16px;
  border-left: 1px solid #fff;
  border-right: 1px solid #fff;
  font-size: 13px;
}
.feed i { font-size: 12px; }

/* status */
.status {
  display: flex;
  height: 25px;
  padding: 2px 5px 5px 1px;
  border-top: 1px solid #fff;
  background: linear-gradient(#808080, #808080) 0 19px / 100% 1px no-repeat, linear-gradient(#fff, #fff) 0 21px / 100% 1px no-repeat;
}
.status .grip { height: 15px; margin: 1px 4px 0; }
.fields {
  flex: 1;
  display: flex;
  gap: 6px;
  border: 1px solid;
  border-color: #808080 #fff #fff #808080;
  white-space: nowrap;
  line-height: 14px;
}
.fields i { line-height: 14px; }
```
